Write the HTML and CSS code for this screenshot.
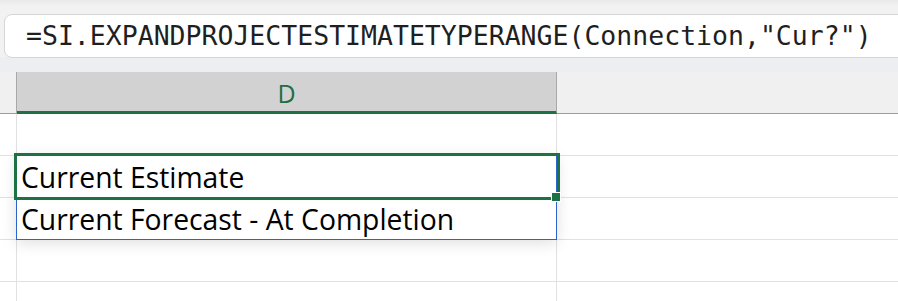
FILE: index.html
```html
<!DOCTYPE html>
<html lang="en">
<head>
    <meta charset="UTF-8">
    <meta name="viewport" content="width=device-width, initial-scale=1.0">
    <title>Spill range</title>
    <link rel="stylesheet" href="styles.css">
</head>
<body>
    <div class="toolbar">
        <div class="formula-bar">=SI.EXPANDPROJECTESTIMATETYPERANGE(Connection,"Cur?")</div>
    </div>
    <div class="sheet">
        <div class="head-row">
            <div class="corner"></div>
            <div class="col-head selected">D</div>
            <div class="col-rest"></div>
        </div>
        <div class="row">
            <div class="row-head"></div>
            <div class="cell"></div>
            <div class="cell rest"></div>
        </div>
        <div class="row">
            <div class="row-head"></div>
            <div class="cell">Current Estimate</div>
            <div class="cell rest"></div>
        </div>
        <div class="row">
            <div class="row-head"></div>
            <div class="cell">Current Forecast - At Completion</div>
            <div class="cell rest"></div>
        </div>
        <div class="row">
            <div class="row-head"></div>
            <div class="cell"></div>
            <div class="cell rest"></div>
        </div>
        <div class="row">
            <div class="row-head"></div>
            <div class="cell"></div>
            <div class="cell rest"></div>
        </div>

        <!-- spill range and active cell sit over the grid -->
        <div class="spill"></div>
        <div class="active-cell"></div>
        <div class="fill-handle"></div>
    </div>
</body>
</html>
```

FILE: styles.css
```css
body {
    margin: 0;
    padding: 0;
    width: 898px;
    height: 301px;
    overflow: hidden;
    background-color: #fff;
    font-family: "Open Sans", Arial, sans-serif;
}
.toolbar {
    height: 72px;
    box-sizing: border-box;
    padding: 14px 0 0 4px;
    background: linear-gradient(#e9e9e9, #f2f2f2 6px, #f2f2f2 57px, #eceef1 57px);
}
.formula-bar {
    box-sizing: border-box;
    height: 44px;
    width: 920px;
    padding-left: 21px;
    background-color: #fff;
    border: 1px solid #d6d6d6;
    border-radius: 8px;
    font-family: "DejaVu Sans Mono", monospace;
    font-size: 26.5px;
    line-height: 42px;
    color: #1f1f1f;
    white-space: nowrap;
}
.sheet {
    position: relative;
    height: 229px;
    overflow: hidden;
}
.head-row, .row {
    display: grid;
    grid-template-columns: 17px 540px 1fr;
}
.head-row {
    height: 42px;
}
.corner, .col-rest {
    background-color: #f0f0f0;
    border-bottom: 1px solid #9c9c9c;
}
.corner {
    border-right: 1px solid #a8a8a8;
}
.col-head {
    background-color: #d2d2d2;
    border-right: 1px solid #a8a8a8;
    border-bottom: 3px solid #1e7145;
    color: #1e6e42;
    font-size: 25px;
    display: flex;
    align-items: center;
    justify-content: center;
    padding-top: 2px;
}
.row {
    height: 42px;
}
.row-head, .cell {
    border-bottom: 1px solid #e1e1e1;
}
.row-head {
    border-right: 1px solid #e1e1e1;
}
.cell {
    border-right: 1px solid #e1e1e1;
    display: flex;
    align-items: center;
    padding-left: 4px;
    padding-top: 1px;
    font-size: 28.3px;
    color: #000;
    white-space: nowrap;
}
.cell.rest {
    border-right: none;
}
.spill {
    position: absolute;
    left: 16px;
    top: 83px;
    width: 541px;
    height: 85px;
    box-sizing: border-box;
    border: 1px solid #2d63c8;
    box-shadow: 0 3px 14px rgba(0, 0, 0, 0.13);
}
.active-cell {
    position: absolute;
    left: 14px;
    top: 81px;
    width: 546px;
    height: 47px;
    box-sizing: border-box;
    border: 3px solid #1e7145;
}
.fill-handle {
    position: absolute;
    left: 551px;
    top: 120px;
    width: 8px;
    height: 8px;
    background-color: #1e7145;
    border: 1px solid #fff;
}
```
